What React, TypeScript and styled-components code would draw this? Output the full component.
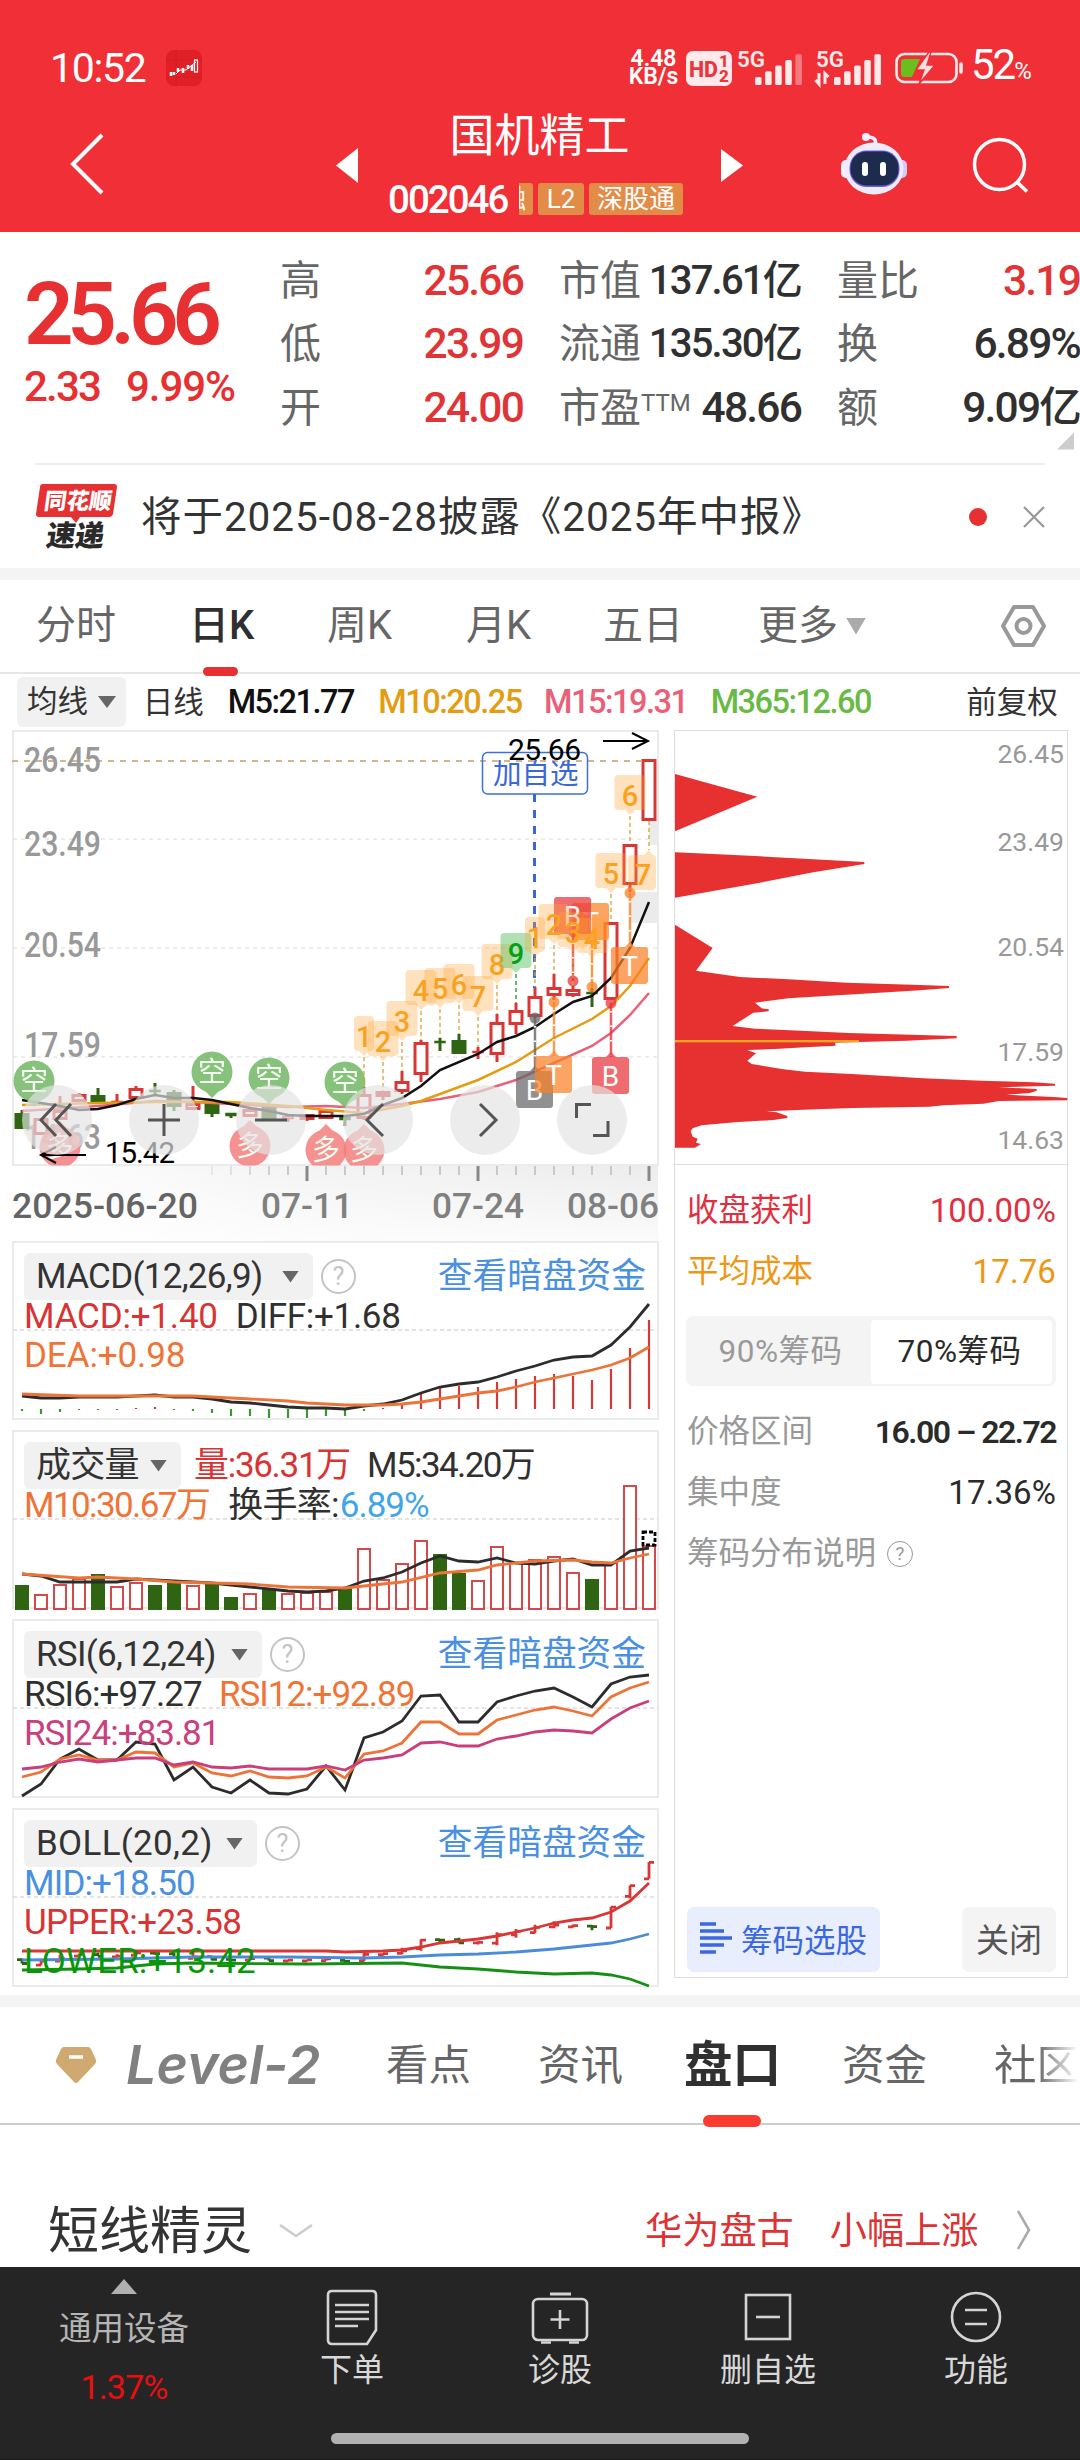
import React from 'react';
import styled, { createGlobalStyle } from 'styled-components';

const GlobalStyle = createGlobalStyle`
  * {
    box-sizing: border-box;
  }

  body {
    margin: 0;
    background: #ffffff;
    font-family: Roboto, 'Noto Sans CJK SC', sans-serif;
    color: #333333;
  }

  svg {
    display: block;
    overflow: visible;
  }
`;

/* ---------- header ---------- */

const Page = styled.div`
  width: 1080px;
  height: 2460px;
  display: flex;
  flex-direction: column;
  overflow: hidden;
  background: #ffffff;
`;

const HeaderContainer = styled.header`
  height: 232px;
  flex-shrink: 0;
  background: #f12f37;
  color: #ffffff;
`;

const StatusBar = styled.div`
  height: 101px;
  padding: 36px 44px 0 50px;
  display: flex;
  justify-content: space-between;
`;

const StatusGroup = styled.div<{ $gap: number }>`
  height: 64px;
  display: flex;
  align-items: center;
  gap: ${(p) => p.$gap}px;
`;

const Clock = styled.span`
  font-size: 41px;
  line-height: 66px;
  font-weight: 400;
  letter-spacing: -1.3px;
`;

const Speed = styled.div`
  width: 49px;
  flex-shrink: 0;
  display: flex;
  flex-direction: column;
  align-items: center;
  font-size: 23px;
  line-height: 18px;
  font-weight: 600;
  white-space: nowrap;
`;

const BatteryText = styled.span`
  width: 65px;
  font-size: 42px;
  line-height: 66px;
  letter-spacing: -2px;
  white-space: nowrap;

  small {
    font-size: 24px;
    letter-spacing: 0;
  }
`;

const NavBar = styled.div`
  height: 131px;
  display: grid;
  grid-template-columns: 336px 22px 363px 22px 98px 67px 65px 54px;
`;

const NavCell = styled.div<{ $top: number; $left?: number }>`
  padding-top: ${(p) => p.$top}px;
  padding-left: ${(p) => p.$left ?? 0}px;
`;

const StockTitle = styled.div`
  padding-top: 8px;
  text-align: center;
`;

const StockName = styled.div`
  padding-left: 0;
  font-size: 45px;
  line-height: 56px;
`;

const StockMeta = styled.div`
  margin-top: 18px;
  padding-left: 30px;
  height: 32px;
  display: flex;
  align-items: center;
  gap: 5px;
`;

const StockCode = styled.span`
  width: 126px;
  font-size: 38.5px;
  font-weight: 500;
  line-height: 35px;
  letter-spacing: -2px;
  text-align: left;
`;

const Tag = styled.span<{ $width: number; $clipped?: boolean }>`
  width: ${(p) => p.$width}px;
  height: 32px;
  padding-right: ${(p) => (p.$clipped ? 7 : 0)}px;
  flex-shrink: 0;
  border-radius: ${(p) => (p.$clipped ? '0 3px 3px 0' : '3px')};
  background: #e38c48;
  font-size: 26px;
  line-height: 32px;
  display: flex;
  justify-content: ${(p) => (p.$clipped ? 'flex-end' : 'center')};
  overflow: hidden;
`;

/* ---------- quote ---------- */

const Quote = styled.section`
  height: 231px;
  display: grid;
  grid-template-columns: 244px 243px 242px 243px;
  gap: 36px;
  flex-shrink: 0;
`;

const PriceBlock = styled.div`
  padding: 40px 0 0 24px;
  color: #e63031;
`;

const Price = styled.div`
  font-size: 87px;
  line-height: 84px;
  font-weight: 600;
  letter-spacing: -6.4px;
`;

const Change = styled.div`
  margin-top: 10px;
  display: flex;
  gap: 26px;
  font-size: 42px;
  line-height: 42px;
  font-weight: 500;
  letter-spacing: -1.8px;
  white-space: nowrap;

  span + span {
    letter-spacing: -1.1px;
  }
`;

const StatColumn = styled.div`
  padding-top: 17px;
`;

const Stat = styled.div`
  height: 63.5px;
  display: flex;
  justify-content: space-between;
  align-items: center;
  white-space: nowrap;
`;

const StatLabel = styled.span`
  font-size: 41px;
  line-height: 60px;
  color: #666666;

  sup {
    display: inline-block;
    font-size: 24px;
    line-height: 24px;
    vertical-align: 11px;
  }
`;

const StatValue = styled.span<{ $up?: boolean; $compact?: boolean }>`
  font-size: ${(p) => (p.$compact ? 40 : 42.5)}px;
  line-height: 60px;
  font-weight: 500;
  letter-spacing: -1.8px;
  color: ${(p) => (p.$up ? '#e03436' : '#303030')};
`;

const CornerMark = styled.i`
  display: block;
  width: 17px;
  height: 17px;
  margin: -7px 6px 0 auto;
  background: #cccccc;
  clip-path: polygon(100% 0, 100% 100%, 0 100%);
`;

const News = styled.section`
  height: 105px;
  margin: 0 35px;
  flex-shrink: 0;
  border-top: 2px solid #ededed;
  display: flex;
  align-items: center;
`;

const NewsText = styled.span`
  margin-left: 23px;
  flex: 1;
  font-size: 40.5px;
  line-height: 58px;
  letter-spacing: 0.95px;
  white-space: nowrap;
`;

const Dot = styled.i`
  width: 18px;
  height: 18px;
  margin-right: 36px;
  border-radius: 50%;
  background: #e73031;
`;

const Band = styled.div`
  height: 12px;
  flex-shrink: 0;
  background: #f4f4f4;
`;

/* ---------- period tabs ---------- */

const PeriodTabs = styled.nav`
  height: 94px;
  padding: 0 35px 0 36px;
  flex-shrink: 0;
  display: flex;
  align-items: center;
  border-bottom: 2px solid #e6e6e6;
`;

const Period = styled.div<{ $width: number; $active?: boolean }>`
  width: ${(p) => p.$width}px;
  height: 92px;
  flex-shrink: 0;
  display: flex;
  align-items: center;
  font-size: 40px;
  color: ${(p) => (p.$active ? '#2f2f2f' : '#666666')};
  font-weight: ${(p) => (p.$active ? 500 : 400)};
`;

const TabLabel = styled.span<{ $line: number }>`
  display: inline-block;
  position: relative;
  line-height: ${(p) => p.$line}px;
`;

const TabUnderline = styled.i<{ $w: number; $h: number; $color: string }>`
  position: absolute;
  left: 50%;
  bottom: -2px;
  width: ${(p) => p.$w}px;
  height: ${(p) => p.$h}px;
  margin-left: ${(p) => -p.$w / 2 - 1}px;
  border-radius: ${(p) => p.$h / 2}px;
  background: ${(p) => p.$color};
`;

const Caret = styled.i<{ $w: number; $h: number; $color: string; $ml: number }>`
  width: ${(p) => p.$w}px;
  height: ${(p) => p.$h}px;
  margin-left: ${(p) => p.$ml}px;
  background: ${(p) => p.$color};
  clip-path: polygon(0 0, 100% 0, 50% 100%);
`;

const AverageRow = styled.div`
  height: 56px;
  padding: 0 20px 0 17px;
  flex-shrink: 0;
  display: flex;
  align-items: center;
  white-space: nowrap;
`;

const AveragePill = styled.div`
  width: 109px;
  height: 50px;
  margin-right: 17px;
  padding-left: 10px;
  display: flex;
  align-items: center;
  border-radius: 6px;
  background: #f1f1f1;
  font-size: 30.5px;
  line-height: 44px;
`;

const AverageItem = styled.span<{ $width: number; $color?: string }>`
  width: ${(p) => p.$width}px;
  font-size: 32.5px;
  line-height: 51px;
  font-weight: 500;
  letter-spacing: -1.5px;
  color: ${(p) => p.$color ?? '#333333'};
`;

const AverageName = styled.span<{ $width: number }>`
  width: ${(p) => p.$width}px;
  font-size: 30.5px;
  line-height: 51px;
`;

/* ---------- charts ---------- */

const ChartArea = styled.section`
  height: 1265px;
  padding-left: 12px;
  flex-shrink: 0;
  display: grid;
  grid-template-columns: 648px 394px;
  column-gap: 14px;
`;

const ChartColumn = styled.div`
  display: flex;
  flex-direction: column;
  gap: 11px;
`;

const MainChart = styled.svg`
  height: 500px;
  flex-shrink: 0;
`;

const PanelBox = styled.div`
  width: 648px;
  height: 178px;
  display: grid;

  > * {
    grid-area: 1 / 1;
  }
`;

const PanelInfo = styled.div`
  z-index: 1;
  padding: 12px 14px 0 12px;
  white-space: nowrap;
`;

const PanelHead = styled.div`
  height: 47px;
  display: flex;
  align-items: center;
`;

const PanelPill = styled.div<{ $width: number; $spacing: number }>`
  width: ${(p) => p.$width}px;
  height: 47px;
  padding: 0 14px 0 12px;
  display: flex;
  align-items: center;
  justify-content: space-between;
  border-radius: 6px;
  background: #f1f1f1;
  font-size: 35px;
  line-height: 49px;
  letter-spacing: ${(p) => p.$spacing}px;
`;

const PanelLink = styled.span`
  margin-left: auto;
  font-size: 34.7px;
  line-height: 47px;
  color: #4a90e2;
`;

const PanelLine = styled.div`
  height: 39px;
  display: flex;
`;

const PanelLines = styled.div`
  margin-top: -3px;
`;

const Reading = styled.span<{ $color: string; $spacing?: number; $gap?: number }>`
  margin-left: ${(p) => p.$gap ?? 0}px;
  font-size: 35px;
  line-height: 39px;
  letter-spacing: ${(p) => p.$spacing ?? -0.75}px;
  color: ${(p) => p.$color};
`;

const HelpMark = styled.span<{ $size: number; $color: string; $gap: number }>`
  width: ${(p) => p.$size}px;
  height: ${(p) => p.$size}px;
  margin-left: ${(p) => p.$gap}px;
  border: ${(p) => p.$size / 14}px solid ${(p) => p.$color};
  border-radius: 50%;
  display: inline-flex;
  align-items: center;
  justify-content: center;
  font-size: ${(p) => p.$size * 0.72}px;
  line-height: 1;
  color: ${(p) => p.$color};
`;

const ChipPanel = styled.aside`
  width: 394px;
  height: 1248px;
  border: 1px solid #dddddd;
  display: flex;
  flex-direction: column;
`;

const ChipChartBox = styled.div`
  height: 434px;
  border-bottom: 1px solid #dddddd;
`;

const ChipBody = styled.div`
  flex: 1;
  padding: 15px 11px 5px 12px;
  display: flex;
  flex-direction: column;
`;

const ChipRow = styled.div<{ $color?: string }>`
  height: 61.5px;
  display: flex;
  align-items: center;
  justify-content: space-between;
  font-size: 31.5px;
  line-height: 60px;
  color: ${(p) => p.$color ?? '#999999'};
`;

const ChipValue = styled.span<{ $color?: string; $strong?: boolean }>`
  color: ${(p) => p.$color ?? '#2a2a2a'};
  font-size: ${(p) => (p.$strong ? 32 : 33)}px;
  font-weight: ${(p) => (p.$strong ? 600 : 400)};
  letter-spacing: ${(p) => (p.$strong ? '-1.5px' : '0.1px')};
  white-space: pre;
`;

const Toggle = styled.div`
  width: 370px;
  height: 70px;
  margin: 13px 0 15px -1px;
  padding: 4px;
  display: grid;
  grid-template-columns: 1fr 181px;
  border-radius: 7px;
  background: #f4f4f4;
`;

const ToggleItem = styled.div<{ $active?: boolean }>`
  padding-right: ${(p) => (p.$active ? 4 : 0)}px;
  border-radius: 4px;
  background: ${(p) => (p.$active ? '#ffffff' : 'transparent')};
  color: ${(p) => (p.$active ? '#2a2a2a' : '#999999')};
  font-size: 31.5px;
  letter-spacing: 0.5px;
  line-height: 64px;
  text-align: center;
`;

const ChipNote = styled.div`
  height: 60px;
  display: flex;
  align-items: center;
  font-size: 31.5px;
  line-height: 60px;
  color: #999999;
`;

const ChipActions = styled.div`
  margin-top: auto;
  display: flex;
  justify-content: space-between;
`;

const ChipButton = styled.button<{ $primary?: boolean }>`
  width: ${(p) => (p.$primary ? 193 : 94)}px;
  height: 65px;
  padding: 0 0 3px;
  border: none;
  border-radius: 7px;
  display: flex;
  align-items: center;
  justify-content: center;
  gap: 9px;
  background: ${(p) => (p.$primary ? '#e8eefe' : '#f4f4f4')};
  color: ${(p) => (p.$primary ? '#3b68e0' : '#555555')};
  font-family: inherit;
  font-size: ${(p) => (p.$primary ? 31.5 : 33)}px;
`;

/* ---------- lower tabs ---------- */

const LowerTabs = styled.nav`
  height: 118px;
  padding-left: 54px;
  flex-shrink: 0;
  display: flex;
  align-items: center;
  border-bottom: 2px solid #cccccc;
`;

const Level2 = styled.span`
  width: 261px;
  margin-left: 28px;
  font-family: Inter, sans-serif;
  font-size: 54px;
  line-height: 60px;
  font-style: italic;
  font-weight: 600;
  letter-spacing: -0.1px;
  color: #808080;
`;

const LowerTab = styled.div<{ $width: number; $active?: boolean; $fade?: boolean }>`
  width: ${(p) => p.$width}px;
  flex-shrink: 0;
  white-space: nowrap;
  height: 116px;
  font-size: ${(p) => (p.$active ? 48.5 : 42.5)}px;
  font-weight: ${(p) => (p.$active ? 700 : 400)};
  color: ${(p) => (p.$active ? '#303030' : '#666666')};
  -webkit-mask-image: ${(p) => (p.$fade ? 'linear-gradient(90deg, #000 50%, transparent 98%)' : 'none')};
`;

const Elf = styled.section`
  height: 142px;
  flex-shrink: 0;
  padding: 72px 49px 0 48px;
  display: flex;
  white-space: nowrap;
`;

const ElfTitle = styled.h2`
  margin: 0;
  font-size: 51px;
  line-height: 70px;
  font-weight: 400;
`;

const ElfToggle = styled.svg`
  margin: 27px 296px 0 27px;
`;

const ElfMore = styled.svg`
  margin: 13px 0 0 38px;
`;

const ElfNews = styled.span`
  margin-left: 36px;
  font-size: 37.2px;
  line-height: 68px;
  color: #dc3334;
`;

const BottomBar = styled.footer`
  height: 193px;
  flex-shrink: 0;
  background: #252525;
  border-bottom: 1px solid #1a1a1a;
`;

const BottomItems = styled.div`
  height: 166px;
  display: grid;
  grid-template-columns: 248px 208px 208px 208px 208px;
`;

const BottomItem = styled.div`
  padding-top: 21px;
  display: flex;
  flex-direction: column;
  align-items: center;
  font-size: 32px;
  line-height: 48px;
  color: #d8d8d8;
`;

const Sector = styled.div`
  padding-top: 12px;
  display: flex;
  flex-direction: column;
  align-items: center;
  font-size: 32.5px;
  line-height: 46px;
  color: #b5b5b5;
`;

const SectorArrow = styled.i`
  width: 26px;
  height: 15px;
  margin-bottom: 12px;
  background: #b0b0b0;
  clip-path: polygon(50% 0, 100% 100%, 0 100%);
`;

const SectorChange = styled.span`
  margin-top: 12px;
  font-size: 34px;
  letter-spacing: -0.8px;
  color: #e80f0f;
`;

const HomeBar = styled.div`
  width: 418px;
  height: 11px;
  margin: 0 auto;
  border-radius: 6px;
  background: #b2b2b2;
`;

/* ---------- data ---------- */

const RED = '#d93636';
const GREEN = '#2f6412';
const X0 = 22;
const STEP = 19;
const xAt = (i: number) => X0 + STEP * i;

// up, body top, body bottom, wick top, wick bottom
type Candle = [number, number, number, number, number];

const candles: Candle[] = [
  [0, 1114, 1128, 1110, 1128], [1, 1119, 1134, 1119, 1134], [1, 1111, 1119, 1096, 1119],
  [1, 1095, 1101, 1093, 1101], [0, 1096, 1102, 1088, 1102], [1, 1101, 1104, 1094, 1104],
  [1, 1089, 1098, 1086, 1098], [0, 1090, 1092, 1083, 1096], [0, 1093, 1106, 1090, 1111],
  [1, 1104, 1109, 1086, 1110], [0, 1103, 1113, 1103, 1117], [0, 1113, 1116, 1113, 1118],
  [1, 1110, 1116, 1110, 1116], [0, 1108, 1118, 1108, 1118], [1, 1116, 1119, 1116, 1122],
  [1, 1115, 1119, 1115, 1121], [1, 1111, 1118, 1110, 1118], [0, 1117, 1120, 1115, 1126],
  [1, 1095, 1118, 1087, 1120], [1, 1092, 1096, 1091, 1100], [1, 1082, 1091, 1071, 1094],
  [1, 1043, 1074, 1040, 1082], [0, 1041, 1043, 1038, 1051], [0, 1041, 1053, 1034, 1054],
  [1, 1051, 1053, 1047, 1059], [1, 1023, 1054, 1014, 1062], [1, 1011, 1024, 1003, 1034],
  [1, 997, 1016, 987, 1018], [1, 988, 995, 974, 1000], [1, 990, 995, 986, 997],
  [0, 992, 994, 988, 1007], [1, 923, 999, 922, 999], [1, 845, 884, 844, 892],
  [1, 760, 820, 759, 820],
];

type Sparse = [number, number][];

const toPoints = (list: Sparse) => list.map(([i, y]) => `${xAt(i)},${y}`).join(' ');
const dense = (list: number[]) => toPoints(list.map((y, i) => [i, y] as [number, number]));

const ma5: Sparse = [
  [0, 1100], [2, 1106], [3, 1110], [4, 1109], [5, 1105], [6, 1099], [7, 1095], [8, 1098], [9, 1098], [10, 1100],
  [11, 1104], [12, 1108], [13, 1111], [14, 1115], [15, 1116], [17, 1116], [18, 1114], [19, 1105], [20, 1098],
  [21, 1086], [22, 1070], [24, 1054], [25, 1042], [26, 1036], [27, 1027], [28, 1014], [29, 1002], [30, 996],
  [31, 978], [32, 948], [33, 902],
];
const ma10: Sparse = [
  [0, 1105], [4, 1103], [7, 1102], [11, 1102], [14, 1106], [16, 1110], [18, 1113], [20, 1106], [21, 1101],
  [24, 1080], [26, 1062], [28, 1038], [30, 1019], [31, 1006], [32, 986], [33, 958],
];
const ma15: Sparse = [
  [0, 1111], [4, 1106], [7, 1101], [9, 1102], [14, 1107], [16, 1106], [18, 1108], [20, 1104], [22, 1099],
  [24, 1092], [26, 1080], [28, 1063], [30, 1046], [31, 1033], [32, 1015], [33, 993],
];

const macdEnds = [
  1411, 1414, 1412, 1410, 1410, 1410, 1408, 1407, 1410, 1411, 1413, 1416, 1416, 1418, 1418, 1418, 1416, 1416,
  1411, 1408, 1404, 1393, 1388, 1386, 1387, 1382, 1379, 1376, 1374, 1376, 1380, 1369, 1348, 1320,
];
const diff = [
  1396, 1398, 1398, 1397, 1397, 1397, 1396, 1395, 1397, 1397, 1399, 1402, 1403, 1405, 1407, 1408, 1408, 1409,
  1406, 1404, 1400, 1393, 1387, 1384, 1382, 1377, 1371, 1366, 1360, 1357, 1356, 1345, 1327, 1304,
];
const dea: Sparse = [
  [0, 1394], [3, 1396], [9, 1396], [12, 1399], [14, 1401], [15, 1403], [17, 1405], [19, 1405], [20, 1404],
  [21, 1402], [22, 1399], [23, 1396], [24, 1393], [25, 1391], [26, 1387], [27, 1382], [28, 1378], [29, 1374],
  [30, 1370], [31, 1365], [32, 1358], [33, 1347],
];

const volumeTops = [
  1585, 1594, 1584, 1578, 1574, 1586, 1582, 1585, 1581, 1585, 1584, 1597, 1593, 1589, 1593, 1592, 1591, 1587,
  1548, 1579, 1563, 1540, 1554, 1573, 1580, 1546, 1562, 1559, 1556, 1572, 1579, 1562, 1485, 1545,
];
const volumeDown = [0, 4, 7, 8, 10, 11, 13, 17, 22, 23, 30];
const volMa5: Sparse = [
  [0, 1574], [1, 1576], [2, 1582], [5, 1582], [6, 1579], [8, 1581], [10, 1583], [12, 1587], [13, 1589],
  [14, 1591], [15, 1592], [16, 1591], [17, 1588], [18, 1581], [19, 1578], [20, 1572], [21, 1563], [22, 1556],
  [23, 1561], [24, 1562], [25, 1558], [26, 1563], [27, 1564], [28, 1561], [29, 1559], [30, 1565], [31, 1565],
  [32, 1551], [33, 1548],
];
const volMa10: Sparse = [
  [0, 1574], [3, 1578], [4, 1577], [6, 1579], [8, 1582], [10, 1583], [12, 1584], [14, 1587], [17, 1588],
  [18, 1586], [20, 1582], [22, 1573], [24, 1570], [25, 1565], [27, 1561], [29, 1560], [30, 1562], [31, 1563],
  [32, 1558], [33, 1554],
];

const rsi6 = [
  1796, 1784, 1759, 1749, 1760, 1760, 1742, 1744, 1780, 1767, 1787, 1793, 1780, 1793, 1794, 1789, 1766, 1790,
  1738, 1732, 1721, 1696, 1695, 1722, 1722, 1702, 1696, 1691, 1688, 1697, 1707, 1684, 1677, 1675,
];
const rsi12 = [
  1777, 1772, 1759, 1755, 1760, 1760, 1752, 1753, 1767, 1763, 1773, 1776, 1771, 1777, 1778, 1776, 1767, 1778,
  1754, 1751, 1743, 1722, 1722, 1734, 1734, 1720, 1715, 1710, 1707, 1711, 1716, 1697, 1688, 1682,
];
const rsi24 = [
  1769, 1767, 1762, 1759, 1762, 1760, 1758, 1758, 1765, 1762, 1767, 1768, 1766, 1769, 1769, 1769, 1766, 1770,
  1760, 1758, 1755, 1743, 1742, 1746, 1746, 1739, 1736, 1732, 1730, 1731, 1733, 1719, 1708, 1701,
];

const bollUpper: Sparse = [
  [0, 1951], [16, 1951], [17, 1952], [19, 1951], [20, 1950], [21, 1947], [22, 1943], [23, 1941], [24, 1939],
  [25, 1936], [26, 1932], [27, 1928], [28, 1923], [29, 1920], [30, 1918], [31, 1912], [32, 1901], [33, 1883],
];
const bollMid: Sparse = [
  [0, 1960], [5, 1959], [9, 1957], [14, 1957], [18, 1958], [20, 1957], [22, 1955], [24, 1954], [26, 1952],
  [28, 1949], [30, 1945], [31, 1943], [32, 1939], [33, 1934],
];
const bollLower: Sparse = [
  [0, 1970], [3, 1969], [5, 1968], [7, 1964], [9, 1963], [15, 1964], [20, 1963], [22, 1967], [24, 1969],
  [26, 1972], [28, 1974], [30, 1973], [31, 1975], [32, 1979], [33, 1986],
];

// candle index, digit, box top
const counts: [number, string, number][] = [
  [18, '1', 1016], [19, '2', 1021], [20, '3', 1001], [21, '4', 970], [22, '5', 968], [23, '6', 964],
  [24, '7', 976], [25, '8', 944], [26, '9', 933], [27, '1', 917], [28, '2', 904], [29, '3', 912],
  [30, '4', 918], [31, '5', 853], [32, '6', 775],
];

// letter, box left, box top, candle index, anchor y
const trades: [string, number, number, number, number, string][] = [
  ['T', 572, 903, 30, 987, '#fb8127'], ['B', 554, 897, 29, 981, '#e8343a'],
  ['B', 516, 1071, 27, 1018, '#666666'], ['T', 535, 1056, 28, 1002, '#fb8127'],
  ['T', 611, 947, 32, 893, '#fb8127'], ['B', 592, 1057, 31, 1003, '#e8343a'],
];

const chipShape =
  'M45 614 158 684 108 752 240 771 385 778 560 788 780 795 867 798 867 804 780 811 560 824 385 835 285 848 305 865 326 868 326 874 280 878 218 918 285 926 455 934 565 939 780 945 890 948 890 955 740 962 597 966 525 968 527 977 435 982 345 987 262 990 288 1000 262 1022 275 1032 365 1047 435 1055 575 1062 665 1067 790 1075 965 1082 1120 1087 1185 1091 1185 1097 1017 1102 1130 1107 1130 1112 1110 1119 1040 1124 1180 1131 1222 1134 1222 1141 1017 1143 970 1151 850 1156 808 1160 580 1164 470 1168 320 1174 350 1177 382 1188 382 1194 340 1200 225 1207 125 1216 98 1225 92 1234 98 1250 113 1256 108 1268 123 1272 105 1283 45 1283Z';

/* ---------- drawings ---------- */

const SignalBars = ({ width, faded, data }: { width: number; faded?: boolean; data?: boolean }) => (
  <svg width={width} height="36" viewBox={`0 0 ${width} 36`}>
    <text x="0" y="17" fontSize="22" fontWeight="600" fill="#ffeaea" textLength="28" lengthAdjust="spacingAndGlyphs">5G</text>
    {[0, 1, 2, 3, 4].map((i) => (
      <rect
        key={i}
        x={18 + i * 10.1}
        y={27 - i * 5.7}
        width="6.500"
        height={8 + i * 5.7}
        rx="1.500"
        fill="#ffeaea"
        opacity={faded && i === 4 ? 0.4 : 1}
      />
    ))}
    {data && <path d="M3 23V34L-0.500 30M9 34V23.500L12.500 27" stroke="#ffeaea" strokeWidth="3" fill="none" />}
  </svg>
);

const AppBadge = () => (
  <svg width="36" height="36" viewBox="0 0 36 36">
    <rect width="36" height="36" rx="8" fill="#e01f26" />
    <path d="M0 10H36M0 27H36M10 0V36" stroke="#cc1d22" strokeWidth="1" opacity=".7" />
    <path d="M5 22V26M8 22V25M12 18V22M17 18V23M22 15V19M26 15V21" stroke="#fff" strokeWidth="2.500" />
    <path d="M10 24 14 20 20 20 30 12" stroke="#fff" strokeWidth="1" fill="none" />
    <rect x="28.500" y="10" width="3" height="12" fill="none" stroke="#fff" strokeWidth="1.200" />
  </svg>
);

const HdBadge = () => (
  <svg width="43" height="35" viewBox="0 0 43 35">
    <rect width="46" height="35" rx="7" fill="#ffe9ea" />
    <text x="3" y="25.500" fontSize="22.500" fontWeight="800" fill="#e8363d" textLength="29" lengthAdjust="spacingAndGlyphs">HD</text>
    <text x="33" y="16" fontSize="17" fontWeight="800" fill="#e8363d">1</text>
    <text x="33" y="31" fontSize="17" fontWeight="800" fill="#e8363d">2</text>
  </svg>
);

const Battery = () => (
  <svg width="69" height="34" viewBox="0 0 69 34">
    <rect x="2.500" y="3" width="60" height="28" rx="8" fill="none" stroke="#ffeaea" strokeWidth="2.600" />
    <path d="M67 13V21" stroke="#ffeaea" strokeWidth="3.500" strokeLinecap="round" />
    <path d="M10 8H26L18 26H10Q7 26 7 23V11Q7 8 10 8Z" fill="#6abf1f" />
    <path d="M35 1 22 19H30L25 33 41 14H33L37 1Z" fill="#ffe0e0" stroke="#f12f37" strokeWidth="1.500" />
  </svg>
);

const Robot = () => (
  <svg width="67" height="62" viewBox="0 0 67 62">
    <path d="M34 11C36 6 32 4 26 4" stroke="#efeaff" strokeWidth="3.500" fill="none" strokeLinecap="round" />
    <circle cx="25" cy="4" r="4" fill="#f5efff" />
    <rect x="0" y="27" width="12" height="18" rx="5" fill="#f0eeff" />
    <rect x="54" y="27" width="12" height="18" rx="5" fill="#d3ccf6" />
    <ellipse cx="33" cy="35.500" rx="29.500" ry="26" fill="#eeecfc" />
    <rect x="8.500" y="17.500" width="50" height="36.500" rx="17" fill="#6f5fe0" />
    <rect x="9.500" y="18.500" width="48" height="34" rx="16" fill="#1d2b4f" />
    <rect x="21" y="29" width="6" height="14" rx="3" fill="#fff" />
    <rect x="39" y="29" width="6" height="14" rx="3" fill="#fff" />
  </svg>
);

const NewsLogo = () => (
  <svg width="83" height="68" viewBox="0 0 83 68">
    <path d="M8 1H79Q82 1 82 4L78 31Q77 34 74 34H45L41 40 36 34H4Q1 34 1 31L5 4Q5 1 8 1Z" fill="#e63133" />
    <g transform="skewX(-8)">
      <text x="12" y="26" fontSize="22.500" fontWeight="900" fill="#fff">同花顺</text>
      <text x="19" y="63" fontSize="29" fontWeight="900" fill="#2a2a2a">速递</text>
    </g>
  </svg>
);

const CountMark = ({ index, digit, top }: { index: number; digit: string; top: number }) => {
  const x = xAt(index);
  const green = digit === '9';
  const half = digit === '1' ? 10 : 15.5;
  return (
    <g>
      <path
        d={`M${x - half + 4} ${top}H${x + half - 4}Q${x + half} ${top} ${x + half} ${top + 4}V${top + 31}Q${x + half} ${top + 35} ${x + half - 4} ${top + 35}H${x + 5}L${x} ${top + 40} ${x - 5} ${top + 35}H${x - half + 4}Q${x - half} ${top + 35} ${x - half} ${top + 31}V${top + 4}Q${x - half} ${top} ${x - half + 4} ${top}Z`}
        fill={green ? '#5cbf62' : '#ffa531'}
        opacity={green ? 0.48 : 0.32}
      />
      <path d={`M${x} ${top + 41}V${candles[index][3]}`} stroke={green ? '#159a1c' : '#dba136'} strokeWidth="1.300" strokeDasharray="4 3" />
      <text x={x} y={top + 31} fontSize="29" fontWeight="500" textAnchor="middle" fill={green ? '#06a011' : '#fba11f'}>{digit}</text>
    </g>
  );
};

const TradeMark = ({ mark }: { mark: (typeof trades)[number] }) => {
  const [letter, left, top, index, anchor, color] = mark;
  const x = xAt(index);
  const below = top > anchor;
  const edge = below ? top : top + 37;
  return (
    <g>
      <path d={`M${x} ${anchor}V${edge}`} stroke={color} strokeWidth="2.500" opacity=".8" />
      <path d={`M${x} ${anchor + (below ? 8 : -8)}V${edge}`} stroke="#fff" strokeWidth="2.500" strokeDasharray="1.500 13" />
      <circle cx={x} cy={anchor} r="5.500" fill={color} opacity=".75" />
      <path d={below ? `M${x - 5} ${top}L${x} ${top - 5} ${x + 5} ${top}Z` : `M${x - 5} ${edge}L${x} ${edge + 5} ${x + 5} ${edge}Z`} fill={color} opacity=".75" />
      <rect x={left} y={top} width="37" height="37" rx="3" fill={color} opacity=".72" />
      <text x={left + 18.5} y={top + 28.5} fontSize="28" textAnchor="middle" fill="#fff">{letter}</text>
    </g>
  );
};

const LongShort = ({ x, y, short }: { x: number; y: number; short?: boolean }) => (
  <g opacity=".84">
    <path
      d={short ? `M${x - 9} ${y + 17}L${x} ${y + 26} ${x + 9} ${y + 17}Z` : `M${x - 9} ${y - 17}L${x} ${y - 26} ${x + 9} ${y - 17}Z`}
      fill={short ? '#6fb763' : '#f57c7c'}
    />
    <circle cx={x} cy={y} r="20.500" fill={short ? '#6fb763' : '#f57c7c'} />
    <text x={x} y={y + 10} fontSize="28" textAnchor="middle" fill="#f3fff0">{short ? '空' : '多'}</text>
  </g>
);

const toolIcons = [
  'M56 1104 41 1120 56 1136M71 1104 56 1120 71 1136',
  'M148 1120H180M164 1104V1136',
  'M255 1120H287',
  'M383 1104 367 1120 383 1136',
  'M480 1104 496 1120 480 1136',
  'M576.500 1118V1104.500H591M593 1135.500H608V1121',
];

const priceLabels: [string, number][] = [
  ['26.45', 772], ['23.49', 856], ['20.54', 957], ['17.59', 1057], ['14.63', 1149],
];

const KLineChart = () => (
  <MainChart width="648" height="500" viewBox="12 730 648 500">
    <defs>
      <linearGradient id="axisX" x1="0" x2="1">
        <stop offset="0" stopColor="#f0f0f0" stopOpacity="0" />
        <stop offset=".4" stopColor="#f0f0f0" stopOpacity=".7" />
        <stop offset="1" stopColor="#ececec" />
      </linearGradient>
      <linearGradient id="axisFade" x1="0" x2="0" y1="0" y2="1">
        <stop offset="0" stopColor="#fff" stopOpacity="0" />
        <stop offset="1" stopColor="#fff" stopOpacity=".8" />
      </linearGradient>
      <clipPath id="plot">
        <rect x="12" y="730" width="648" height="435.500" />
      </clipPath>
    </defs>
    <rect x="13" y="1166" width="645" height="75" fill="url(#axisX)" />
    <rect x="13" y="1166" width="645" height="75" fill="url(#axisFade)" />
    <rect x="13" y="731" width="645" height="434" fill="none" stroke="#ebebeb" strokeWidth="2" />
    {[839, 948, 1057].map((y) => (
      <path key={y} d={`M13 ${y}H658`} stroke="#e8e8e8" strokeWidth="1.500" strokeDasharray="4 4" />
    ))}
    <path d="M12 761H641" stroke="#c1a069" strokeWidth="1.700" strokeDasharray="6 6" />
    <rect x="649" y="820" width="9" height="25" fill="#ebebeb" />
    <rect x="630" y="892" width="28" height="31" fill="#ebebeb" />
    {priceLabels.map(([label, y]) => (
      <text key={label} x="24" y={y} fontSize="35" fontWeight="500" fill="#999" textLength="77" lengthAdjust="spacingAndGlyphs">{label}</text>
    ))}

    <g clipPath="url(#plot)">
      {candles.map(([up, top, bottom, high, low], i) => {
        const x = xAt(i);
        const thin = bottom - top < 4;
        const half = thin ? 6.5 : 7.5;
        return (
          <g key={i} stroke={up ? RED : GREEN} strokeWidth="3">
            <path d={`M${x} ${high}V${top}M${x} ${bottom}V${low}`} />
            <rect
              x={x - half + 1.5}
              y={top + 0.5}
              width={half * 2 - 3}
              height={Math.max(bottom - top - 1, 1)}
              fill={up ? '#fff' : GREEN}
              strokeWidth={thin ? 1.5 : 3}
            />
          </g>
        );
      })}
      <polyline points={toPoints(ma15)} fill="none" stroke="#ea6078" strokeWidth="2.500" />
      <polyline points={toPoints(ma10)} fill="none" stroke="#e39d12" strokeWidth="2.500" />
      <polyline points={toPoints(ma5)} fill="none" stroke="#111" strokeWidth="2.500" />
      <LongShort short x={34} y={1081} />
      <LongShort short x={212} y={1072} />
      <LongShort short x={269} y={1078} />
      <LongShort short x={345} y={1082} />
      <LongShort x={60} y={1147} />
      <LongShort x={250} y={1146} />
      <LongShort x={326} y={1150} />
      <LongShort x={364} y={1150} />
    </g>

    <path d="M534.500 794V988" stroke="#3c66d8" strokeWidth="3" strokeDasharray="8 8" />
    <rect x="482.500" y="752.500" width="105" height="41.500" rx="5" fill="none" stroke="#3f6fda" strokeWidth="1.500" />
    <text x="493" y="784" fontSize="28.500" fill="#3a67da">加自选</text>
    <text x="508" y="760" fontSize="30" fill="#000" textLength="73">25.66</text>
    <path d="M603 741H648M632 733 648 741 632 749" stroke="#000" strokeWidth="2" fill="none" />
    <path d="M86 1155H41M56 1147 41 1155 56 1163" stroke="#000" strokeWidth="2" fill="none" />
    <text x="105" y="1163" fontSize="29.500" fill="#000" textLength="70">15.42</text>

    {trades.map((mark, i) => (
      <TradeMark key={i} mark={mark} />
    ))}
    {counts.map(([index, digit, top]) => (
      <CountMark key={index} index={index} digit={digit} top={top} />
    ))}
    <path d="M628 859Q628 855 632 855H644L649 850 653 855Q656 855 656 859V886Q656 890 652 890H632Q628 890 628 886Z" fill="#ffa531" opacity=".32" />
    <path d="M649 821V850" stroke="#dba136" strokeWidth="1.300" strokeDasharray="4 3" />
    <text x="643" y="885" fontSize="29" fontWeight="500" textAnchor="middle" fill="#fba11f">7</text>

    {toolIcons.map((d, i) => (
      <g key={d}>
        <circle cx={57 + i * 107} cy="1120" r="35" fill="#e3e3e3" opacity=".68" />
        <path d={d} fill="none" stroke="#555" strokeWidth="3" />
      </g>
    ))}
    {Array.from({ length: 24 }, (_, k) => k + 10).map((i) => {
      const major = i === 15 || i === 24 || i === 33;
      return (
        <path
          key={i}
          d={`M${xAt(i)} 1166V${major ? 1181 : 1175}`}
          stroke={major ? '#888' : '#c4c4c4'}
          strokeWidth={major ? 3 : 1.8}
          opacity={Math.min(1, (i - 8) / 6)}
        />
      );
    })}
    <g fontSize="35" fontWeight="500" fill="#808080">
      <text x="12" y="1218" fill="#646464" textLength="186" lengthAdjust="spacingAndGlyphs">2025-06-20</text>
      <text x="261" y="1218" textLength="92" lengthAdjust="spacingAndGlyphs">07-11</text>
      <text x="432" y="1218" textLength="92" lengthAdjust="spacingAndGlyphs">07-24</text>
      <text x="567" y="1218" textLength="92" lengthAdjust="spacingAndGlyphs">08-06</text>
    </g>
  </MainChart>
);

type ReadingData = { text: string; color: string; spacing?: number; gap?: number };

type PanelProps = {
  top: number;
  title: string;
  pill: number;
  spacing?: number;
  lines: ReadingData[][];
  head?: ReadingData[];
  children: React.ReactNode;
};

const renderReading = ({ text, color, spacing, gap }: ReadingData) => (
  <Reading key={text} $color={color} $spacing={spacing} $gap={gap}>{text}</Reading>
);

const IndicatorPanel = ({ top, title, pill, spacing = -0.7, lines, head, children }: PanelProps) => (
  <PanelBox>
    <svg width="648" height="178" viewBox={`12 ${top} 648 178`}>
      <rect x="13" y={top + 1} width="645" height="177" fill="none" stroke="#ebebeb" strokeWidth="2" />
      <path d={`M13 ${top + 89}H658`} stroke="#dcdcdc" strokeWidth="1.300" strokeDasharray="4 3" />
      <g fill="none" strokeWidth="2.800">{children}</g>
    </svg>
    <PanelInfo>
      <PanelHead>
        <PanelPill $width={pill} $spacing={spacing}>
          {title}
          <Caret $w={17} $h={12} $color="#666666" $ml={0} />
        </PanelPill>
        {head ? (
          head.map(renderReading)
        ) : (
          <>
            <HelpMark $size={35} $color="#c4c4c4" $gap={8}>?</HelpMark>
            <PanelLink>查看暗盘资金</PanelLink>
          </>
        )}
      </PanelHead>
      <PanelLines>
        {lines.map((line) => (
          <PanelLine key={line[0].text}>{line.map(renderReading)}</PanelLine>
        ))}
      </PanelLines>
    </PanelInfo>
  </PanelBox>
);

const ChipChart = () => (
  <svg width="392" height="433" viewBox="675 731 392 433">
    <g transform="translate(660 720) scale(.33333)" fill="#e73131">
      <path d="M45 162 292 230 45 334Z" />
      <path d="M45 397 144 401 300 409 460 418 613 426 613 432 460 457 300 488 45 533Z" />
      <path d={chipShape} />
      <rect x="45" y="960" width="552" height="7" fill="#f0a51b" />
    </g>
    <g fontSize="26.500" fill="#999" textAnchor="end">
      <text x="1064" y="763">26.45</text>
      <text x="1064" y="851">23.49</text>
      <text x="1064" y="956">20.54</text>
      <text x="1064" y="1061">17.59</text>
      <text x="1064" y="1149">14.63</text>
    </g>
  </svg>
);

const bottomIcons: [string, React.ReactNode][] = [
  ['下单', (
    <>
      <path d="M8 3H48Q52 3 52 7V42L43 56H8Q4 56 4 52V7Q4 3 8 3Z" />
      <path d="M11 17H45M11 24H45M11 31H45M11 38H34" />
    </>
  )],
  ['诊股', (
    <>
      <path d="M18 6H39" strokeWidth="3" />
      <rect x="1" y="11" width="54" height="41" rx="5" />
      <path d="M28 22V41M18.500 31.500H37.500M9 54.500H19M37 54.500H47" />
    </>
  )],
  ['删自选', (
    <>
      <rect x="6" y="7" width="44" height="44" />
      <path d="M16 29H40" />
    </>
  )],
  ['功能', (
    <>
      <circle cx="28" cy="29" r="24" />
      <path d="M17 22H39M17 36H39" />
    </>
  )],
];

const App = () => (
  <Page>
    <GlobalStyle />
    <HeaderContainer>
      <StatusBar>
        <StatusGroup $gap={20}>
          <Clock>10:52</Clock>
          <AppBadge />
        </StatusGroup>
        <StatusGroup $gap={8}>
          <Speed>
            <span>4.48</span>
            <span>KB/s</span>
          </Speed>
          <HdBadge />
          <SignalBars width={71} faded />
          <SignalBars width={70} data />
          <Battery />
          <BatteryText>52<small>%</small></BatteryText>
        </StatusGroup>
      </StatusBar>
      <NavBar>
        <NavCell $top={33} $left={70}>
          <svg width="34" height="60" viewBox="0 0 34 60">
            <path d="M32 1 3 30 32 59" fill="none" stroke="#fff" strokeWidth="4" />
          </svg>
        </NavCell>
        <NavCell $top={47}>
          <svg width="22" height="35"><path d="M22 0V35L0 17.500Z" fill="#fff" /></svg>
        </NavCell>
        <StockTitle>
          <StockName>国机精工</StockName>
          <StockMeta>
            <StockCode>002046</StockCode>
            <Tag $width={14} $clipped>融</Tag>
            <Tag $width={46}>L2</Tag>
            <Tag $width={94}>深股通</Tag>
          </StockMeta>
        </StockTitle>
        <NavCell $top={48}>
          <svg width="22" height="33"><path d="M0 0V33L22 16.500Z" fill="#fff" /></svg>
        </NavCell>
        <div />
        <NavCell $top={32}><Robot /></NavCell>
        <div />
        <NavCell $top={36}>
          <svg width="56" height="56" viewBox="0 0 56 56">
            <g fill="none" stroke="#fff" strokeWidth="3.500">
              <circle cx="26.500" cy="27.500" r="25" />
              <path d="M44 45 54 54.500" />
            </g>
          </svg>
        </NavCell>
      </NavBar>
    </HeaderContainer>

    <Quote>
      <PriceBlock>
        <Price>25.66</Price>
        <Change>
          <span>2.33</span>
          <span>9.99%</span>
        </Change>
      </PriceBlock>
      <StatColumn>
        <Stat><StatLabel>高</StatLabel><StatValue $up>25.66</StatValue></Stat>
        <Stat><StatLabel>低</StatLabel><StatValue $up>23.99</StatValue></Stat>
        <Stat><StatLabel>开</StatLabel><StatValue $up>24.00</StatValue></Stat>
      </StatColumn>
      <StatColumn>
        <Stat><StatLabel>市值</StatLabel><StatValue $compact>137.61亿</StatValue></Stat>
        <Stat><StatLabel>流通</StatLabel><StatValue $compact>135.30亿</StatValue></Stat>
        <Stat><StatLabel>市盈<sup>TTM</sup></StatLabel><StatValue>48.66</StatValue></Stat>
      </StatColumn>
      <StatColumn>
        <Stat><StatLabel>量比</StatLabel><StatValue $up>3.19</StatValue></Stat>
        <Stat><StatLabel>换</StatLabel><StatValue>6.89%</StatValue></Stat>
        <Stat><StatLabel>额</StatLabel><StatValue>9.09亿</StatValue></Stat>
        <CornerMark />
      </StatColumn>
    </Quote>

    <News>
      <NewsLogo />
      <NewsText>将于2025-08-28披露《2025年中报》</NewsText>
      <Dot />
      <svg width="22" height="22" viewBox="0 0 22 22">
        <path d="M1 1 21 21M21 1 1 21" stroke="#999" strokeWidth="2.200" />
      </svg>
    </News>
    <Band />

    <PeriodTabs>
      <Period $width={153}><TabLabel $line={96}>分时</TabLabel></Period>
      <Period $width={138} $active>
        <TabLabel $line={96}>日K<TabUnderline $w={35} $h={9} $color="#e73031" /></TabLabel>
      </Period>
      <Period $width={139}><TabLabel $line={96}>周K</TabLabel></Period>
      <Period $width={137}><TabLabel $line={96}>月K</TabLabel></Period>
      <Period $width={155}><TabLabel $line={96}>五日</TabLabel></Period>
      <Period $width={243}>
        <TabLabel $line={96}>更多</TabLabel>
        <Caret $w={20} $h={17} $color="#aaaaaa" $ml={8} />
      </Period>
      <svg width="46" height="44" viewBox="0 0 46 44">
        <g fill="none" stroke="#999" strokeWidth="4">
          <path d="M13 3H32L43 22 32 41H13L2 22Z" strokeLinejoin="round" />
          <circle cx="22.500" cy="22" r="7" />
        </g>
      </svg>
    </PeriodTabs>

    <AverageRow>
      <AveragePill>
        均线
        <Caret $w={18} $h={12} $color="#666666" $ml={10} />
      </AveragePill>
      <AverageName $width={85}>日线</AverageName>
      <AverageItem $width={151} $color="#111111">M5:21.77</AverageItem>
      <AverageItem $width={166} $color="#e39d12">M10:20.25</AverageItem>
      <AverageItem $width={167} $color="#ea6078">M15:19.31</AverageItem>
      <AverageItem $width={256} $color="#68ba44">M365:12.60</AverageItem>
      <AverageName $width={94}>前复权</AverageName>
    </AverageRow>

    <ChartArea>
      <ChartColumn>
        <KLineChart />
        <IndicatorPanel
          top={1241}
          title="MACD(12,26,9)"
          pill={289}
          lines={[
            [
              { text: 'MACD:+1.40', color: '#d93434', spacing: -0.2 },
              { text: 'DIFF:+1.68', color: '#303030', spacing: -0.3, gap: 18 },
            ],
            [{ text: 'DEA:+0.98', color: '#ef7438', spacing: -0.1 }],
          ]}
        >
          {macdEnds.map((y, i) => (
            <path key={i} d={`M${xAt(i)} 1409V${y}`} stroke={y > 1409 ? '#389a2c' : '#d13a38'} strokeWidth="2.200" />
          ))}
          <polyline points={dense(diff)} stroke="#2c2c2c" />
          <polyline points={toPoints(dea)} stroke="#ec7439" />
        </IndicatorPanel>
        <IndicatorPanel
          top={1430}
          title="成交量"
          pill={157}
          head={[
            { text: '量:36.31万', color: '#d93434', spacing: -1.3, gap: 13 },
            { text: 'M5:34.20万', color: '#303030', spacing: -1.6, gap: 17 },
          ]}
          lines={[[
            { text: 'M10:30.67万', color: '#ef7438', spacing: -1.6 },
            { text: '换手率:', color: '#303030', gap: 19 },
            { text: '6.89%', color: '#42a5e6', spacing: -1, gap: 1 },
          ]]}
        >
          {volumeTops.map((y, i) => {
            const down = volumeDown.includes(i);
            return (
              <rect
                key={i}
                x={xAt(i) - 6}
                y={y + 1}
                width="12"
                height={1608 - y}
                fill={down ? GREEN : '#fff'}
                stroke={down ? GREEN : '#d5494b'}
                strokeWidth="2"
              />
            );
          })}
          <rect x="643" y="1532" width="12" height="13" stroke="#000" strokeDasharray="4 2" />
          <polyline points={toPoints(volMa5)} stroke="#2c2c2c" />
          <polyline points={toPoints(volMa10)} stroke="#ec7439" />
        </IndicatorPanel>
        <IndicatorPanel
          top={1619}
          title="RSI(6,12,24)"
          pill={238}
          lines={[
            [
              { text: 'RSI6:+97.27', color: '#303030', spacing: -0.9 },
              { text: 'RSI12:+92.89', color: '#ef7438', spacing: -1, gap: 17 },
            ],
            [{ text: 'RSI24:+83.81', color: '#c8407d', spacing: -1 }],
          ]}
        >
          <polyline points={dense(rsi6)} stroke="#2c2c2c" />
          <polyline points={dense(rsi12)} stroke="#ec7439" />
          <polyline points={dense(rsi24)} stroke="#c93f7b" />
        </IndicatorPanel>
        <IndicatorPanel
          top={1808}
          title="BOLL(20,2)"
          pill={233}
          spacing={0.3}
          lines={[
            [{ text: 'MID:+18.50', color: '#4a90e2', spacing: -0.85 }],
            [{ text: 'UPPER:+23.58', color: '#d93434', spacing: -0.6 }],
            [{ text: 'LOWER:+13.42', color: '#079707', spacing: 0.1 }],
          ]}
        >
          {candles.map(([up, top, bottom, high, low], i) => {
            const y = (v: number) => 1862 + (v - 759) * 0.275;
            const x = xAt(i);
            const open = y(up ? bottom : top);
            const close = y(up ? top : bottom);
            return (
              <path
                key={i}
                d={`M${x} ${y(high)}V${y(low)}M${x - 5} ${open}H${x}M${x} ${close}H${x + 5}`}
                stroke={up ? RED : GREEN}
              />
            );
          })}
          <polyline points={toPoints(bollUpper)} stroke="#d93636" />
          <polyline points={toPoints(bollMid)} stroke="#4a8cd8" />
          <polyline points={toPoints(bollLower)} stroke="#149014" />
        </IndicatorPanel>
      </ChartColumn>

      <ChipPanel>
        <ChipChartBox><ChipChart /></ChipChartBox>
        <ChipBody>
          <ChipRow $color="#e0303f">收盘获利<ChipValue $color="#e0303f">100.00%</ChipValue></ChipRow>
          <ChipRow $color="#ee9716">平均成本<ChipValue $color="#ee9716">17.76</ChipValue></ChipRow>
          <Toggle>
            <ToggleItem>90%筹码</ToggleItem>
            <ToggleItem $active>70%筹码</ToggleItem>
          </Toggle>
          <ChipRow>价格区间<ChipValue $strong>16.00 – 22.72</ChipValue></ChipRow>
          <ChipRow>集中度<ChipValue>17.36%</ChipValue></ChipRow>
          <ChipNote>筹码分布说明<HelpMark $size={26} $color="#999999" $gap={11}>?</HelpMark></ChipNote>
          <ChipActions>
            <ChipButton $primary>
              <svg width="32" height="32" viewBox="0 0 32 32">
                <path d="M0 2H16M0 9H24M0 16H32M0 23H24M0 30H16" stroke="#3b68e0" strokeWidth="3.600" />
              </svg>
              筹码选股
            </ChipButton>
            <ChipButton>关闭</ChipButton>
          </ChipActions>
        </ChipBody>
      </ChipPanel>
    </ChartArea>
    <Band />

    <LowerTabs>
      <svg width="44" height="38" viewBox="0 0 44 38">
        <path d="M10 1H34Q36 1 37 3L42 14Q43 16 41 18L24 36Q22 38 20 36L3 18Q1 16 2 14L7 3Q8 1 10 1Z" fill="#cfa96f" />
        <path d="M15 11H29" stroke="#fff" strokeWidth="3.500" />
      </svg>
      <Level2>Level-2</Level2>
      <LowerTab $width={152}><TabLabel $line={118}>看点</TabLabel></LowerTab>
      <LowerTab $width={146}><TabLabel $line={118}>资讯</TabLabel></LowerTab>
      <LowerTab $width={158} $active>
        <TabLabel $line={118}>盘口<TabUnderline $w={58} $h={12} $color="#fb3a30" /></TabLabel>
      </LowerTab>
      <LowerTab $width={152}><TabLabel $line={118}>资金</TabLabel></LowerTab>
      <LowerTab $width={86} $fade><TabLabel $line={118}>社区</TabLabel></LowerTab>
    </LowerTabs>

    <Elf>
      <ElfTitle>短线精灵</ElfTitle>
      <ElfToggle width="34" height="14" viewBox="0 0 34 14">
        <path d="M1 1 17 12 33 1" fill="none" stroke="#ccc" strokeWidth="2.500" />
      </ElfToggle>
      <ElfNews>华为盘古</ElfNews>
      <ElfNews>小幅上涨</ElfNews>
      <ElfMore width="14" height="40" viewBox="0 0 14 40">
        <path d="M1 1 12 20 1 39" fill="none" stroke="#aaa" strokeWidth="2.500" />
      </ElfMore>
    </Elf>

    <BottomBar>
      <BottomItems>
        <Sector>
          <SectorArrow />
          通用设备
          <SectorChange>1.37%</SectorChange>
        </Sector>
        {bottomIcons.map(([label, icon]) => (
          <BottomItem key={label}>
            <svg width="56" height="58" viewBox="0 0 56 58">
              <g fill="none" stroke="#d4d4d4" strokeWidth="2.600">{icon}</g>
            </svg>
            {label}
          </BottomItem>
        ))}
      </BottomItems>
      <HomeBar />
    </BottomBar>
  </Page>
);

export default App;
